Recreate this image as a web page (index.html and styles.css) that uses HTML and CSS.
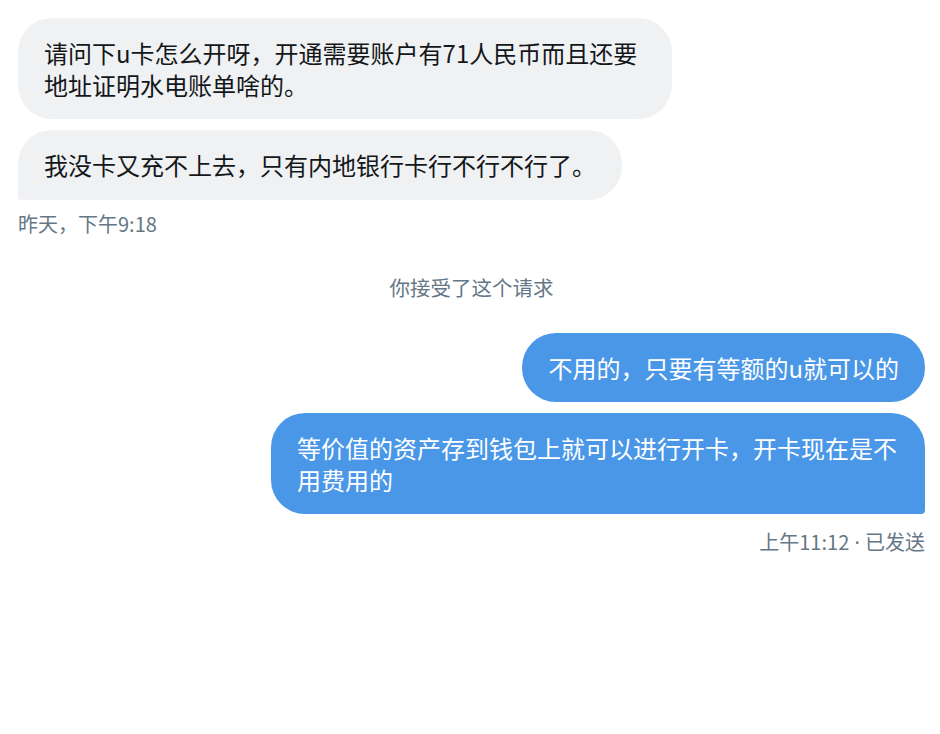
FILE: index.html
```html
<!DOCTYPE html>
<html lang="zh-CN">
<head>
  <meta charset="UTF-8" />
  <title>私信</title>
  <link rel="stylesheet" href="styles.css">
</head>
<body>

  <div class="conversation">

    <div class="group received">
      <div class="bubble">请问下u卡怎么开呀，开通需要账户有71人民币而且还要地址证明水电账单啥的。</div>
      <div class="bubble last">我没卡又充不上去，只有内地银行卡行不行不行了。</div>
      <div class="meta">昨天，下午9:18</div>
    </div>

    <div class="notice">你接受了这个请求</div>

    <div class="group sent">
      <div class="bubble">不用的，只要有等额的u就可以的</div>
      <div class="bubble last">等价值的资产存到钱包上就可以进行开卡，开卡现在是不用费用的</div>
      <div class="meta">上午11:12<span class="dot"> · </span>已发送</div>
    </div>

  </div>

</body>
</html>
```

FILE: styles.css
```css
body {
  margin: 0;
  background: #fff;
  font-family: "Noto Sans CJK SC", "Noto Sans", sans-serif;
  color: #14171a;
}
.conversation {
  padding: 18px 15px 0 18px;
  display: flex;
  flex-direction: column;
}
.group {
  display: flex;
  flex-direction: column;
  gap: 11px;
}
.received {
  align-items: flex-start;
}
.sent {
  align-items: flex-end;
  margin-top: 32px;
}
.bubble {
  box-sizing: border-box;
  max-width: 654px;
  padding: 19px 26px;
  font-size: 24px;
  line-height: 31.5px;
  border-radius: 34px;
}
.received .bubble {
  background: #eff1f3;
}
.received .bubble.last {
  border-bottom-left-radius: 4px;
}
.sent .bubble {
  background: #4a97e8;
  color: #fff;
}
.sent .bubble.last {
  border-bottom-right-radius: 4px;
}
.meta {
  font-size: 20px;
  line-height: 28px;
  color: #657786;
  margin-top: -1px;
}
.sent .meta {
  margin-top: 3px;
}
.dot {
  font-family: "Noto Sans", sans-serif;
}
.notice {
  margin-top: 35px;
  text-align: center;
  font-size: 20.5px;
  line-height: 28px;
  color: #657786;
}
```
